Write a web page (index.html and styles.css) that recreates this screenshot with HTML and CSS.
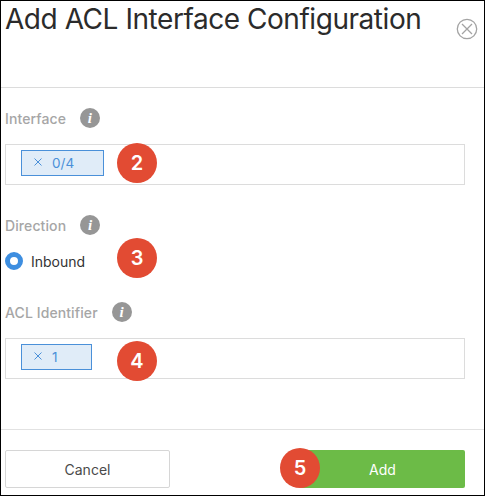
FILE: index.html
```html
<!DOCTYPE html>
<html lang="en">
<head>
  <meta charset="UTF-8" />
  <title>Add ACL Interface Configuration</title>
  <link rel="stylesheet" href="styles.css">
</head>
<body>
  <div class="dialog">
    <div class="dialog-header">
      <h1>Add ACL Interface Configuration</h1>
      <svg class="close" width="22" height="22" viewBox="0 0 22 22">
        <circle cx="11" cy="11" r="9.7" fill="none" stroke="#a3a3a3" stroke-width="1.3"/>
        <path d="M6 6 L16 16 M16 6 L6 16" fill="none" stroke="#a3a3a3" stroke-width="1.3"/>
      </svg>
    </div>

    <div class="dialog-body">
      <div class="field field-interface">
        <div class="field-label"><label>Interface</label><span class="info">i</span></div>
        <div class="tag-input">
          <span class="tag tag-wide">
            <svg class="tag-x" width="8" height="8" viewBox="0 0 8 8"><path d="M0.5 0.5 L7.5 7.5 M7.5 0.5 L0.5 7.5" fill="none" stroke="#4a90d9"/></svg>
            0/4
          </span>
        </div>
        <span class="step step-interface">2</span>
      </div>

      <div class="field field-direction">
        <div class="field-label"><label>Direction</label><span class="info">i</span></div>
        <div class="radio-row"><span class="radio"></span>Inbound</div>
        <span class="step step-radio">3</span>
      </div>

      <div class="field field-acl">
        <div class="field-label"><label>ACL Identifier</label><span class="info">i</span></div>
        <div class="tag-input">
          <span class="tag tag-narrow">
            <svg class="tag-x" width="8" height="8" viewBox="0 0 8 8"><path d="M0.5 0.5 L7.5 7.5 M7.5 0.5 L0.5 7.5" fill="none" stroke="#4a90d9"/></svg>
            1
          </span>
        </div>
        <span class="step step-acl">4</span>
      </div>
    </div>

    <div class="dialog-footer">
      <button class="btn btn-cancel">Cancel</button>
      <button class="btn btn-add">Add<span class="step step-add">5</span></button>
    </div>
  </div>
</body>
</html>
```

FILE: styles.css
```css
html, body {
  margin: 0;
  height: 100%;
  background: #fff;
}
body {
  font-family: Inter, 'Liberation Sans', sans-serif;
  overflow: hidden;
}
.dialog {
  box-sizing: border-box;
  width: 485px;
  height: 496px;
  border: 1px solid #000;
  display: flex;
  flex-direction: column;
}
.dialog-header {
  height: 86px;
  border-bottom: 1px solid #dcdcdc;
  display: flex;
  justify-content: space-between;
  align-items: flex-start;
  padding: 0 6px 0 4px;
}
h1 {
  margin: 0;
  font-size: 28px;
  font-weight: 400;
  letter-spacing: -0.45px;
  line-height: 36px;
  color: #2b2b2b;
}
.close {
  margin-top: 17px;
}
.dialog-body {
  flex: 1;
  padding: 0 19px 0 4px;
}
.field {
  position: relative;
}
.field-interface {
  padding-top: 20px;
}
.field-direction {
  padding-top: 30px;
}
.field-acl {
  padding-top: 32px;
}
.field-label {
  display: flex;
  align-items: center;
  height: 20px;
  font-size: 14px;
  font-weight: 500;
  letter-spacing: 0.1px;
  color: #a6a6a6;
}
.info {
  width: 20px;
  height: 20px;
  margin-left: 14px;
  border-radius: 50%;
  background: #969696;
  color: #fff;
  font-family: 'Liberation Serif', serif;
  font-style: italic;
  font-weight: 700;
  font-size: 15px;
  line-height: 20px;
  text-align: center;
}
.tag-input {
  box-sizing: border-box;
  height: 41px;
  margin-top: 16px;
  padding: 5px 15px;
  border: 1px solid #dcdcdc;
}
.tag {
  box-sizing: border-box;
  display: flex;
  align-items: center;
  height: 26px;
  padding-left: 12px;
  border: 1px solid #4a90d9;
  background: #e0ecf8;
  color: #4a90d9;
  font-size: 13.5px;
}
.tag-wide {
  width: 83px;
}
.tag-narrow {
  width: 71px;
}
.tag-x {
  margin: -2px 10px 0 0;
}
.radio-row {
  display: flex;
  align-items: center;
  height: 18px;
  margin-top: 17px;
  font-size: 14px;
  color: #333;
}
.radio {
  box-sizing: border-box;
  width: 18px;
  height: 18px;
  margin-right: 8px;
  border: 5px solid #3d8ee0;
  border-radius: 50%;
  background: #fff;
}
.step {
  position: absolute;
  width: 40px;
  height: 40px;
  border-radius: 50%;
  background: #e24b33;
  color: #fff;
  font-size: 20px;
  font-weight: 600;
  line-height: 40px;
  text-align: center;
}
.step-interface {
  left: 112px;
  bottom: 2px;
}
.step-radio {
  left: 112px;
  bottom: -8px;
}
.step-acl {
  left: 112px;
  bottom: -2px;
}
.dialog-footer {
  height: 66px;
  box-sizing: border-box;
  border-top: 1px solid #e2e2e2;
  display: flex;
  justify-content: space-between;
  padding: 20px 19px 0 4px;
}
.btn {
  box-sizing: border-box;
  position: relative;
  width: 165px;
  height: 38px;
  border-radius: 2px;
  font-family: inherit;
  font-size: 14px;
}
.btn-cancel {
  background: #fff;
  border: 1px solid #d6d6d6;
  color: #4a4a4a;
}
.btn-add {
  background: #6cbb47;
  border: 0;
  color: #fff;
}
.step-add {
  left: -20px;
  top: -2px;
}
```
